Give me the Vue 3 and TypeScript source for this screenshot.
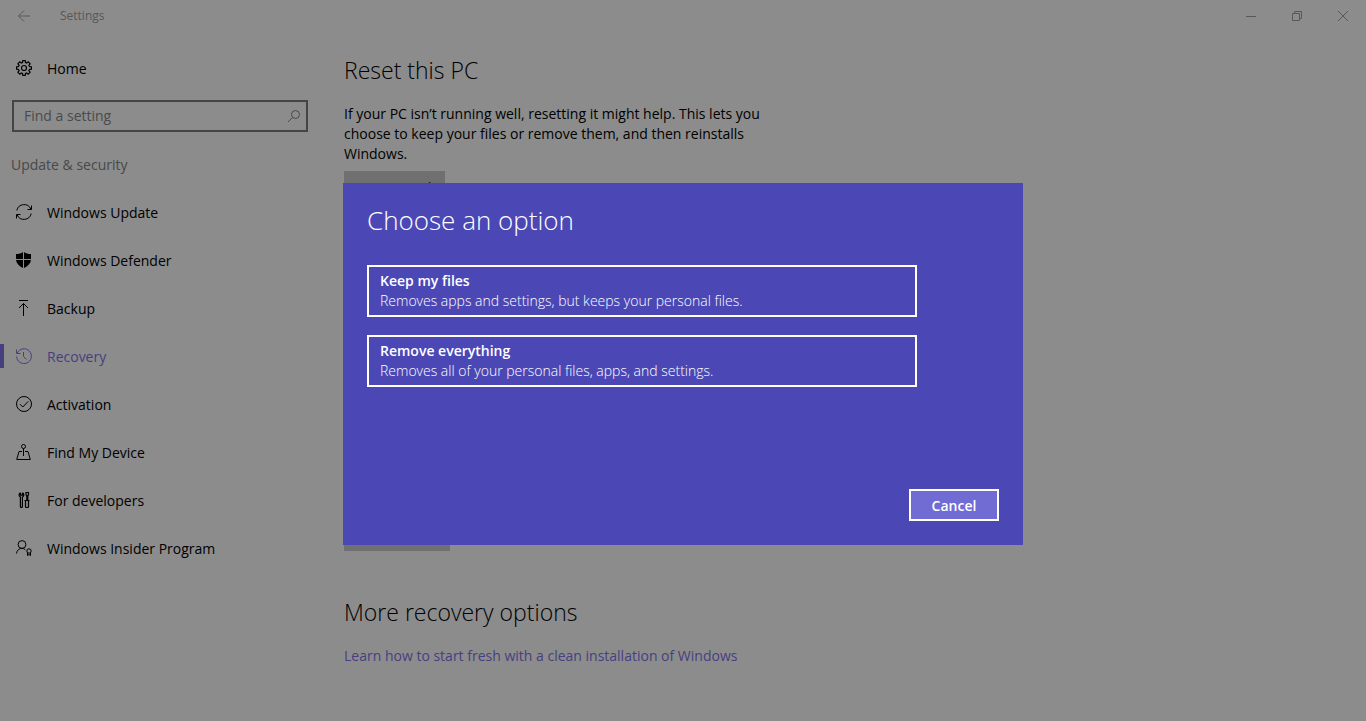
<script setup lang="ts">
import { ref } from 'vue'

type IconName = 'update' | 'defender' | 'backup' | 'recovery' | 'activation' | 'device' | 'developers' | 'insider'

interface NavItem {
  id: IconName
  label: string
}

interface ResetOption {
  title: string
  detail: string
}

const query = ref('')
const current = ref<IconName>('recovery')

const navItems: NavItem[] = [
  { id: 'update', label: 'Windows Update' },
  { id: 'defender', label: 'Windows Defender' },
  { id: 'backup', label: 'Backup' },
  { id: 'recovery', label: 'Recovery' },
  { id: 'activation', label: 'Activation' },
  { id: 'device', label: 'Find My Device' },
  { id: 'developers', label: 'For developers' },
  { id: 'insider', label: 'Windows Insider Program' },
]

const options: ResetOption[] = [
  { title: 'Keep my files', detail: 'Removes apps and settings, but keeps your personal files.' },
  { title: 'Remove everything', detail: 'Removes all of your personal files, apps, and settings.' },
]
</script>

<template>
  <div class="window">
    <header class="titlebar">
      <button class="back" type="button" aria-label="Back">
        <svg viewBox="0 0 14 14" width="14" height="14"><path d="M13 7H1.500M7 1.500 1.500 7 7 12.500" /></svg>
      </button>
      <span class="app-name">Settings</span>
      <div class="caption-buttons">
        <button type="button" aria-label="Minimize">
          <svg viewBox="0 0 12 12" width="12" height="12"><path d="M1 6.500h10" /></svg>
        </button>
        <button type="button" aria-label="Restore">
          <svg viewBox="0 0 12 12" width="12" height="12"><path d="M1.500 3.500h7v7h-7zM3.500 3.500v-2h7v7h-2" /></svg>
        </button>
        <button type="button" aria-label="Close">
          <svg viewBox="0 0 12 12" width="12" height="12"><path d="M1 1l10 10M11 1 1 11" /></svg>
        </button>
      </div>
    </header>

    <div class="body">
      <aside class="sidebar">
        <a class="nav-link home" href="#home">
          <svg class="gear" viewBox="0 0 16 16" width="16" height="16">
            <path d="M6.800 .6h2.400l.3 1.900 1.100.5 1.600-1.200 1.900 1.900-1.200 1.600.5 1.200 2 .3v2.400l-2 .3-.5 1.200 1.200 1.600-1.900 1.900-1.600-1.200-1.100.5-.3 1.900H6.800l-.3-1.900-1.200-.5-1.500 1.200-1.900-1.900 1.200-1.600-.5-1.200-2-.3V6.800l2-.3.5-1.200-1.200-1.600 1.900-1.900 1.500 1.200 1.200-.5z" />
            <circle cx="8" cy="8" r="2.500" />
          </svg>
          <span>Home</span>
        </a>

        <div class="search">
          <input v-model="query" type="text" placeholder="Find a setting" aria-label="Find a setting" />
          <svg viewBox="0 0 14 14" width="14" height="14"><circle cx="8.500" cy="5.500" r="4" /><path d="M5.600 8.400 1 13" /></svg>
        </div>

        <h2 class="group">Update &amp; security</h2>

        <nav class="nav">
          <a
            v-for="item in navItems"
            :key="item.id"
            class="nav-link"
            :class="{ active: item.id === current }"
            :href="'#' + item.id"
            @click="current = item.id"
          >
            <svg viewBox="0 0 16 16" width="16" height="16">
              <g v-if="item.id === 'update'">
                <path d="M.8 6.500A7.400 7.400 0 0 1 14.800 5M15.500 1.500v4h-4M15.200 9.500A7.400 7.400 0 0 1 1.200 11M.5 14.500v-4h4" />
              </g>
              <g v-else-if="item.id === 'defender'" class="solid">
                <path d="M0 2c3 0 5-.6 7-2v7H0zM8 0c2 1.400 4 2 7 2v5H8zM0 8h7v8C3 14 .5 11.500 0 8zM8 8h7c-.5 3.500-3 6-7 8z" />
              </g>
              <g v-else-if="item.id === 'backup'">
                <path d="M3 .5h9M7.500 16V3.500M3 8l4.500-4.500L12 8" />
              </g>
              <g v-else-if="item.id === 'recovery'">
                <path d="M1.300 5A7.400 7.400 0 1 1 .6 8.500M.5 1.500v4h4M7.500 4v4.500l3 3" />
              </g>
              <g v-else-if="item.id === 'activation'">
                <circle cx="8" cy="8" r="7.500" />
                <path d="M4 8.200 6.800 11l5.400-5.600" />
              </g>
              <g v-else-if="item.id === 'device'">
                <circle cx="7.500" cy="2.500" r="2" />
                <path d="M7.500 4.500V12M6 7.500H3L.7 15.500h13.600L12 7.500H9" />
              </g>
              <g v-else-if="item.id === 'developers'" class="bold">
                <path d="M4.500 .8v2.400h2V.8M4.500.8a2.300 2.300 0 0 0-.1 4.200v9.500q0 1 1 1t1-1V5a2.300 2.300 0 0 0 .1-4.200M10 .5h2.500v2.300l-.7 1V8.500h-1V3.800l-.8-1zM8.500 8.500h5M9.500 8.500v6q0 1 1 1h1q1 0 1-1v-6" />
              </g>
              <g v-else>
                <circle cx="6" cy="4.500" r="3.900" />
                <path d="M.5 13.500c.3-3 2.500-5.100 5.300-5.100 1.500 0 2.600.5 3.500 1.300" />
                <circle cx="13" cy="11" r="2.200" />
                <path d="M11.500 12.500v3l1.500-1 1.500 1v-3" />
              </g>
            </svg>
            <span>{{ item.label }}</span>
          </a>
        </nav>
      </aside>

      <main class="content">
        <section>
          <h1>Reset this PC</h1>
          <p>
            If your PC isn’t running well, resetting it might help. This lets you choose to keep your files or remove
            them, and then reinstalls Windows.
          </p>
          <button class="action" type="button">Get started</button>
        </section>
        <section class="startup">
          <h1>Advanced startup</h1>
          <p>
            Start up from a device or disc (such as a USB drive or DVD), change Windows startup settings, or restore
            Windows from a system image. This will restart your PC.
          </p>
          <button class="action" type="button">Restart now</button>
        </section>
        <section>
          <h1>More recovery options</h1>
          <a class="more" href="#fresh">Learn how to start fresh with a clean installation of Windows</a>
        </section>
      </main>
    </div>

    <div class="backdrop">
      <div class="dialog" role="dialog" aria-modal="true" aria-labelledby="dialog-title">
        <h2 id="dialog-title">Choose an option</h2>
        <div class="options">
          <button v-for="option in options" :key="option.title" class="option" type="button">
            <strong>{{ option.title }}</strong>
            <span>{{ option.detail }}</span>
          </button>
        </div>
        <button class="cancel" type="button">Cancel</button>
      </div>
    </div>
  </div>
</template>

<style>
body {
  margin: 0;
  background: #8c8c8c;
}
</style>

<style scoped>
.window {
  box-sizing: border-box;
  min-height: 100vh;
  background: #8c8c8c;
  color: #000;
  font-family: 'Segoe UI', 'Open Sans', 'Noto Sans', sans-serif;
  font-size: 14px;
  line-height: 20px;
}

button {
  font: inherit;
  color: inherit;
  border: 0;
  padding: 0;
  border-radius: 0;
  background: none;
}

svg {
  display: block;
  flex: none;
  fill: none;
  stroke: currentColor;
  stroke-width: 1;
}

.solid {
  fill: currentColor;
  stroke: none;
}

.gear,
.bold {
  stroke-width: 1.2;
}

h1,
h2,
p {
  margin: 0;
}

.titlebar {
  display: flex;
  align-items: center;
  height: 32px;
  color: #58585a;
}

.back {
  display: flex;
  align-items: center;
  justify-content: center;
  width: 48px;
  height: 32px;
}

.app-name {
  margin-left: 12px;
  font-size: 12px;
}

.caption-buttons {
  display: flex;
  margin-left: auto;
}

.caption-buttons button {
  display: flex;
  align-items: center;
  justify-content: center;
  width: 46px;
  height: 32px;
}

.body {
  display: flex;
}

.sidebar {
  flex: none;
  width: 320px;
}

.nav-link {
  display: flex;
  align-items: center;
  gap: 15px;
  height: 48px;
  padding-left: 16px;
  color: inherit;
  text-decoration: none;
}

.nav-link span {
  padding-top: 2px;
}

.home {
  margin-top: 12px;
}

.nav-link.active {
  color: #464080;
  background: linear-gradient(#464080, #464080) 0 50% / 4px 24px no-repeat;
}

.search {
  display: flex;
  align-items: center;
  box-sizing: border-box;
  height: 32px;
  margin: 8px 12px 0;
  padding-right: 5px;
  border: 2px solid #454545;
  color: #4a4a4c;
}

.search input {
  flex: 1;
  min-width: 0;
  height: 28px;
  box-sizing: border-box;
  padding: 0 10px 2px;
  border: 0;
  outline: 0;
  background: none;
  color: #000;
  font: inherit;
}

.search input::placeholder {
  color: #4a4a4c;
  opacity: 1;
}

.group {
  margin: 23px 0 13px 11px;
  color: #48484a;
  font-size: 14px;
  font-weight: 400;
}

.content {
  flex: 1;
  padding: 22px 24px;
}

.content h1 {
  font-size: 23px;
  font-weight: 300;
  line-height: 32px;
}

.content p {
  max-width: 440px;
  margin: 18px 0 7px;
}

.action {
  display: block;
  height: 32px;
  padding: 2px 14px 0;
  background: #707070;
}

.startup {
  margin: 199px 0 45px;
}

.more {
  display: inline-block;
  margin-top: 18px;
  color: #464080;
  text-decoration: none;
}

.backdrop {
  position: fixed;
  inset: 0;
  display: flex;
  align-items: center;
  justify-content: center;
  padding-top: 7px;
}

.dialog {
  display: flex;
  flex-direction: column;
  box-sizing: border-box;
  width: 680px;
  max-width: 100%;
  min-height: 362px;
  padding: 20px 24px 24px;
  background: #4b48b6;
  color: #fff;
}

.dialog h2 {
  font-size: 26px;
  font-weight: 300;
  line-height: 34px;
}

.options {
  display: grid;
  gap: 18px;
  max-width: 550px;
  margin-top: 28px;
}

.option {
  display: flex;
  flex-direction: column;
  padding: 4px 11px;
  border: 2px solid #fff;
  text-align: left;
}

.option strong {
  font-weight: 600;
}

.option span {
  font-weight: 300;
}

.cancel {
  align-self: flex-end;
  min-width: 90px;
  height: 32px;
  margin-top: auto;
  padding-top: 2px;
  border: 2px solid #fff;
  background: #706cd4;
  font-weight: 600;
}
</style>
